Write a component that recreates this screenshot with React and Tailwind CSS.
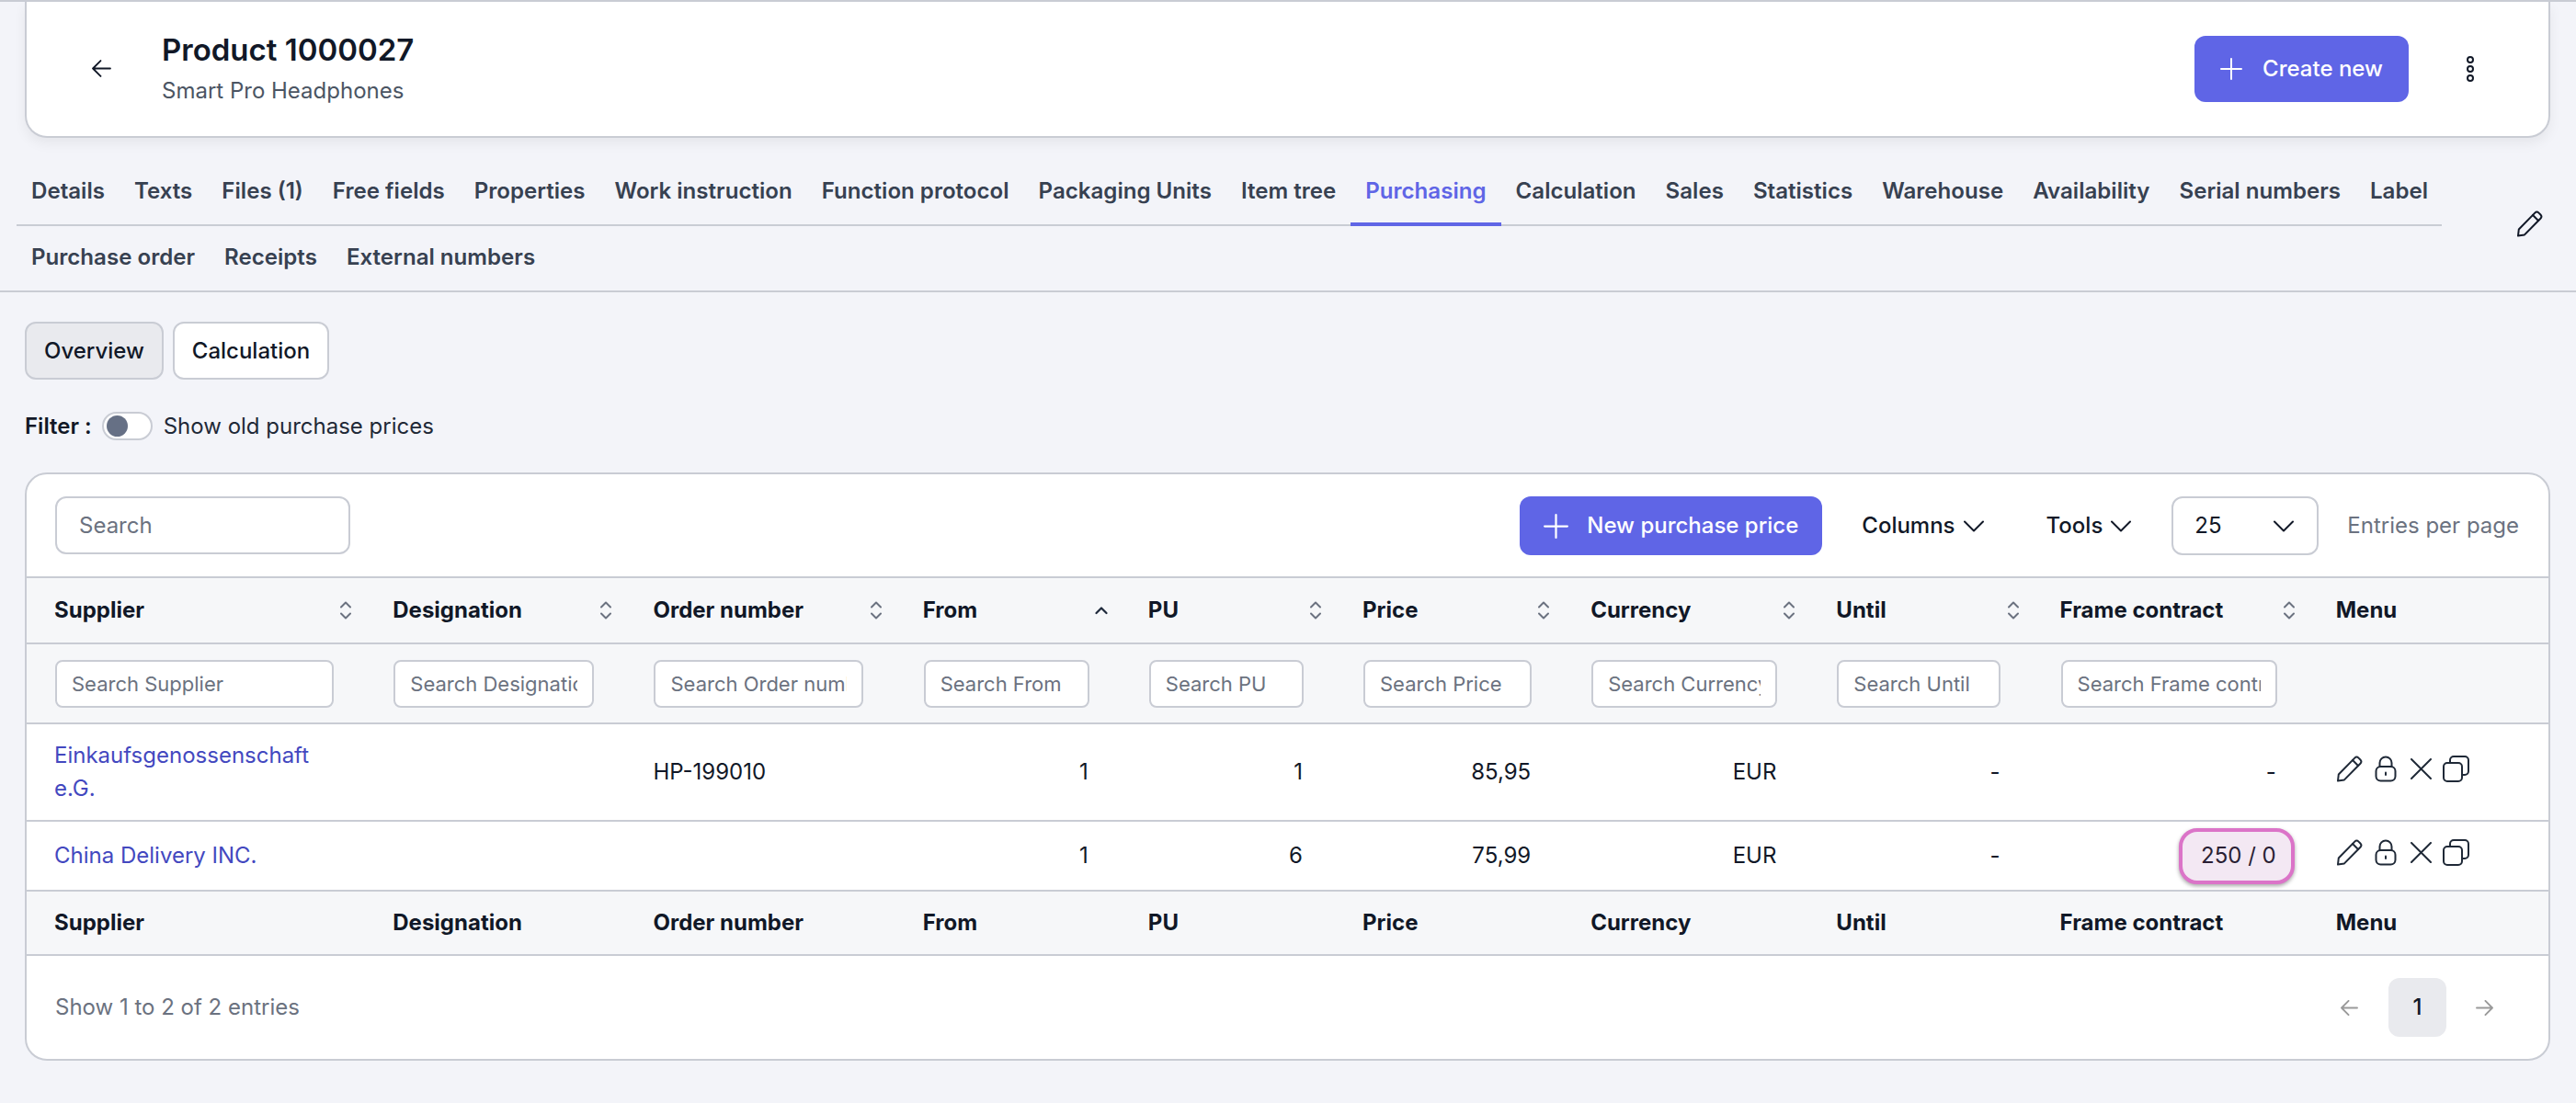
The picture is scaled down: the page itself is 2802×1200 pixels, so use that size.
import React from "react";

const tabs1 = ["Details","Texts","Files (1)","Free fields","Properties","Work instruction","Function protocol","Packaging Units","Item tree","Purchasing","Calculation","Sales","Statistics","Warehouse","Availability","Serial numbers","Label"];
const tabs2 = ["Purchase order","Receipts","External numbers"];

const cols = [
  { name: "Supplier", w: "w-[368px]", input: "w-[303px]", sort: true },
  { name: "Designation", w: "w-[283px]", input: "w-[218px]", sort: true },
  { name: "Order number", w: "w-[293px]", input: "w-[228px]", sort: true },
  { name: "From", w: "w-[245px]", input: "w-[180px]", sort: "asc" },
  { name: "PU", w: "w-[233px]", input: "w-[168px]", sort: true },
  { name: "Price", w: "w-[248px]", input: "w-[183px]", sort: true },
  { name: "Currency", w: "w-[267px]", input: "w-[202px]", sort: true },
  { name: "Until", w: "w-[243px]", input: "w-[178px]", sort: true },
  { name: "Frame contract", w: "w-[300px]", input: "w-[235px]", sort: true },
  { name: "Menu", w: "w-[262px]" },
];

const PencilIcon = ({ className }) => (
  <svg className={className} width="29" height="29" viewBox="0 0 29 29" fill="none" stroke="currentColor" strokeWidth="2" strokeLinejoin="round" strokeLinecap="round">
    <path d="M2 27.5l.8-7L20.3 2.6a3 3 0 0 1 4.2 0l1.9 1.9a3 3 0 0 1 0 4.2L9 26.4z" />
    <path d="M18 5l6 6" />
  </svg>
);
const LockIcon = ({ className }) => (
  <svg className={className} width="24" height="29" viewBox="0 0 24 29" fill="none" stroke="currentColor" strokeWidth="2" strokeLinecap="round">
    <rect x="1.5" y="12" width="21" height="15.5" rx="5" />
    <path d="M5.5 12V8a6.5 6.5 0 0 1 13 0v4" />
    <path d="M12 18.5v2.5" />
  </svg>
);
const XIcon = ({ className }) => (
  <svg className={className} width="23" height="23" viewBox="0 0 23 23" fill="none" stroke="currentColor" strokeWidth="2" strokeLinecap="round">
    <path d="M1 1l21 21M22 1L1 22" />
  </svg>
);
const CopyIcon = ({ className }) => (
  <svg className={className} width="29" height="29" viewBox="0 0 29 29" fill="none" stroke="currentColor" strokeWidth="2" strokeLinejoin="round">
    <rect x="1" y="8" width="20" height="20" rx="4" />
    <path d="M8 8V5a4 4 0 0 1 4-4h12a4 4 0 0 1 4 4v12a4 4 0 0 1-4 4h-3" />
  </svg>
);
const Plus = ({ size, className }) => (
  <svg className={className} width={size} height={size} viewBox="0 0 24 24" fill="none" stroke="currentColor" strokeWidth="2" strokeLinecap="round">
    <path d="M12 1v22M1 12h22" />
  </svg>
);
const Chevron = ({ className }) => (
  <svg className={className} width="22" height="13" viewBox="0 0 22 13" fill="none" stroke="currentColor" strokeWidth="2" strokeLinecap="round" strokeLinejoin="round">
    <path d="M1 1.5l10 10 10-10" />
  </svg>
);
const SortIcon = () => (
  <svg width="14" height="20" viewBox="0 0 14 20" fill="none" stroke="#6b7280" strokeWidth="2" strokeLinecap="round" strokeLinejoin="round">
    <path d="M2 6.5L7 1.5l5 5M2 13.5l5 5 5-5" />
  </svg>
);
const SortAsc = () => (
  <svg width="14" height="20" viewBox="0 0 14 20" fill="none" stroke="#1e293b" strokeWidth="2.2" strokeLinecap="round" strokeLinejoin="round">
    <path d="M1.5 13L7 7.5l5.5 5.5" />
  </svg>
);
const ArrowLeft = ({ w, h, sw, className }) => (
  <svg className={className} width={w} height={h} viewBox="0 0 20 18" fill="none" stroke="currentColor" strokeWidth={sw} strokeLinecap="round" strokeLinejoin="round">
    <path d="M19 9H1M9 1L1 9l8 8" />
  </svg>
);
const ArrowRight = ({ w, h, sw, className }) => (
  <svg className={className} width={w} height={h} viewBox="0 0 20 18" fill="none" stroke="currentColor" strokeWidth={sw} strokeLinecap="round" strokeLinejoin="round">
    <path d="M1 9h18M11 1l8 8-8 8" />
  </svg>
);
const Kebab = () => (
  <svg width="10" height="28" viewBox="0 0 10 28" fill="none" stroke="#111827" strokeWidth="2">
    <circle cx="5" cy="4" r="3" />
    <circle cx="5" cy="14" r="3" />
    <circle cx="5" cy="24" r="3" />
  </svg>
);

const MenuIcons = () => (
  <div className="flex items-start -mt-[8px] text-[#1f2937]">
    <PencilIcon />
    <LockIcon className="ml-[13px]" />
    <XIcon className="ml-[15px] mt-[3px]" />
    <CopyIcon className="ml-[12px]" />
  </div>
);

function Tab({ label }) {
  const active = label === "Purchasing";
  return (
    <div className={"h-[72px] -mb-[2px] px-4 pb-[4px] flex items-center whitespace-nowrap text-[24.1px] font-semibold border-b-4 border-t-4 border-t-transparent " + (active ? "text-[#5f65e6] border-b-[#5f65e6]" : "text-[#374151] border-b-transparent")}>
      {label}
    </div>
  );
}

function FootRow() {
  return (
    <tr className="h-[70px] bg-[#f6f7f9] border-b-2 border-[#c9ccd4] font-bold text-[#111827]">
      {cols.map((c) => (
        <td key={c.name} className="pl-[30px]">{c.name}</td>
      ))}
    </tr>
  );
}

export default function App() {
  return (
    <div className="h-[1200px] w-full overflow-hidden bg-[#f3f4f9] border-t-2 border-[#c9ccd4] font-[Inter,sans-serif] text-[24px] leading-[1.5] text-[#111827]">
      {/* Header card */}
      <div className="ml-[27px] mr-[28px] h-[148px] bg-white border-x-2 border-b-2 border-[#c9ccd4] rounded-b-[24px] shadow-[0_6px_14px_rgba(0,0,0,0.06)] flex items-center">
        <ArrowLeft w={21} h={19} sw={1.8} className="ml-[71px] mb-[2px] text-[#111827]" />
        <div className="ml-[55px] -mt-[3px] flex flex-col">
          <div className="text-[33px] leading-[48px] font-semibold text-[#111827]">Product 1000027</div>
          <div className="leading-[37px] mt-[2px] text-[#4b5563]">Smart Pro Headphones</div>
        </div>
        <button className="ml-auto mb-[1px] h-[72px] w-[233px] rounded-[12px] bg-[#5f65e6] text-white font-medium flex items-center justify-center gap-[22px]">
          <Plus size={24} />
          Create new
        </button>
        <div className="ml-[62px] mr-[80px] mb-[1px] flex"><Kebab /></div>
      </div>

      {/* Tabs */}
      <div className="mt-[24px] pl-[18px] border-b-2 border-[#c9ccd4] flex items-center">
        <div className="w-[2638px]">
          <div className="flex border-b-2 border-[#c9ccd4]">
            {tabs1.map((t) => <Tab key={t} label={t} />)}
          </div>
          <div className="flex">
            {tabs2.map((t) => <Tab key={t} label={t} />)}
          </div>
        </div>
        <PencilIcon className="ml-[81px] mb-[4px] text-[#111827]" />
      </div>

      {/* Sub tabs */}
      <div className="mt-[32px] ml-[27px] flex gap-[10px]">
        <button className="h-[63px] w-[151px] rounded-[12px] border-2 border-[#c9ccd4] bg-[#e9eaee] font-medium text-[#111827]">Overview</button>
        <button className="h-[63px] w-[170px] rounded-[12px] border-2 border-[#c9ccd4] bg-white font-medium text-[#111827]">Calculation</button>
      </div>

      {/* Filter */}
      <div className="mt-[35px] ml-[27px] h-[31px] flex items-center">
        <span className="font-semibold">Filter :</span>
        <div className="ml-[11px] w-[55px] h-[31px] rounded-full border-2 border-[#c9ccd4] bg-white flex items-center pl-[3px]">
          <div className="w-[23px] h-[23px] rounded-full bg-[#667085]" />
        </div>
        <span className="ml-[12px] text-[#1f2937]">Show old purchase prices</span>
      </div>

      {/* Table card */}
      <div className="mt-[35px] ml-[27px] mr-[28px] h-[640px] bg-white border-2 border-[#c9ccd4] rounded-[24px] overflow-hidden flex flex-col">
        <div className="h-[111px] pt-[24px] pl-[31px] pr-[32px] flex items-start">
          <input placeholder="Search" className="w-[321px] h-[63px] rounded-[12px] border-2 border-[#c9ccd4] px-[24px] placeholder:text-[#6b7280] outline-none" />
          <button className="ml-auto w-[329px] h-[64px] rounded-[12px] bg-[#5f65e6] text-white font-medium flex items-center justify-center gap-[20px]">
            <Plus size={27} />
            New purchase price
          </button>
          <div className="ml-[43px] h-[64px] flex items-center gap-[9px] font-medium">Columns <Chevron /></div>
          <div className="ml-[68px] h-[64px] flex items-center gap-[9px] font-medium">Tools <Chevron /></div>
          <div className="ml-[44px] w-[160px] h-[64px] rounded-[12px] border-2 border-[#c9ccd4] flex items-center justify-between pl-[23px] pr-[25px]">25 <Chevron /></div>
          <div className="ml-[31px] h-[64px] flex items-center text-[#6b7280]">Entries per page</div>
        </div>

        <table className="table-fixed w-[2744px] border-collapse">
          <colgroup>
            {cols.map((c) => <col key={c.name} className={c.w} />)}
          </colgroup>
          <thead>
            <tr className="h-[72px] bg-[#f6f7f9] border-y-2 border-[#c9ccd4]">
              {cols.map((c) => (
                <th key={c.name} className="pl-[30px] pr-[14px] text-left font-bold">
                  <div className="flex items-center justify-between">
                    <span>{c.name}</span>
                    {c.sort === "asc" ? <SortAsc /> : c.sort ? <SortIcon /> : null}
                  </div>
                </th>
              ))}
            </tr>
            <tr className="h-[87px] bg-[#f6f7f9] border-b-2 border-[#c9ccd4]">
              {cols.map((c) => (
                <th key={c.name} className="pl-[31px] font-normal text-left">
                  {c.input && (
                    <input
                      placeholder={"Search " + c.name}
                      className={c.input + " h-[52px] rounded-[8px] border-2 border-[#c9ccd4] bg-white px-[16px] text-[22px] placeholder:text-[#6b7280] outline-none"}
                    />
                  )}
                </th>
              ))}
            </tr>
          </thead>
          <tbody>
            <tr className="h-[106px] border-b-2 border-[#c9ccd4]">
              <td className="pl-[30px] pr-[40px] text-[#4348bf]">Einkaufsgenossenschaft e.G.</td>
              <td />
              <td className="pl-[30px]">HP-199010</td>
              <td className="pr-[35px] text-right">1</td>
              <td className="pr-[35px] text-right">1</td>
              <td className="pr-[35px] text-right">85,95</td>
              <td className="pr-[35px] text-right">EUR</td>
              <td className="pr-[35px] text-right">-</td>
              <td className="pr-[35px] text-right">-</td>
              <td className="pl-[30px]"><MenuIcons /></td>
            </tr>
            <tr className="h-[76px] border-b-2 border-[#c9ccd4]">
              <td className="pl-[30px] text-[#4348bf]">China Delivery INC.</td>
              <td />
              <td />
              <td className="pr-[35px] text-right">1</td>
              <td className="pr-[35px] text-right">6</td>
              <td className="pr-[35px] text-right">75,99</td>
              <td className="pr-[35px] text-right">EUR</td>
              <td className="pr-[35px] text-right">-</td>
              <td className="pr-[35px] text-right">
                <span className="inline-flex items-center h-[61px] -mr-[20px] pl-[20px] pr-[16px] rounded-[20px] border-4 border-[#db74c8] bg-[#f3e8f3] shadow-[0_2px_4px_rgba(0,0,0,0.35)] text-[#2a1f33]">250 / 0</span>
              </td>
              <td className="pl-[30px]"><MenuIcons /></td>
            </tr>
            <FootRow />
          </tbody>
        </table>

        <div className="flex-1 pl-[31px] pr-[60px] flex items-center text-[#6b7280]">
          <span>Show 1 to 2 of 2 entries</span>
          <div className="ml-auto flex items-center">
            <ArrowLeft w={19} h={17} sw={2} className="text-[#9a9a9a]" />
            <div className="ml-[33px] w-[63px] h-[64px] rounded-[12px] bg-[#e9eaee] flex items-center justify-center font-medium text-[#111827]">1</div>
            <ArrowRight w={19} h={17} sw={2} className="ml-[32px] text-[#9a9a9a]" />
          </div>
        </div>
      </div>
    </div>
  );
}
